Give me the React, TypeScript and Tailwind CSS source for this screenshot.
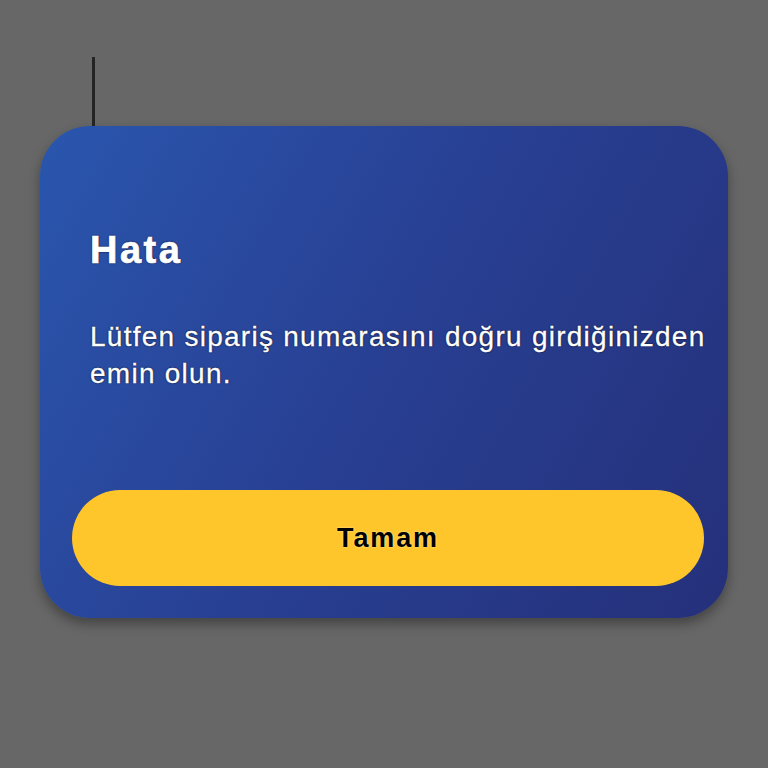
import React from "react";

export default function App() {
  return (
    <div
      className="w-[768px] h-[768px] bg-[#676767] pt-[57px] pl-[40px]"
      style={{ fontFamily: '"Liberation Sans", Arial, sans-serif' }}
    >
      {/* stand behind the dialog */}
      <div className="ml-[52px] w-[3px] h-[69px] bg-[#242424]" />

      {/* error dialog */}
      <div className="w-[688px] h-[492px] rounded-[50px] bg-[linear-gradient(120deg,#2a56ae_0%,#283f92_50%,#25307a_100%)] shadow-[0_6px_12px_rgba(0,0,0,0.35)] flex flex-col pt-[105px] pb-[32px] pl-[32px] pr-[24px]">
        <h1 className="pl-[18px] text-[38px] leading-[38px] font-bold tracking-[0.065em] text-white [-webkit-text-stroke:0.7px_white] [text-shadow:0_0_2px_#0b1230,0_0_1px_#000]">
          Hata
        </h1>
        <p className="pl-[18px] mt-[49px] w-[640px] text-[28px] leading-[37px] tracking-[0.045em] text-white [-webkit-text-stroke:0.3px_white] [text-shadow:0_0_2px_#0b1230,0_0_1px_#000]">
          Lütfen sipariş numarasını doğru girdiğinizden emin olun.
        </p>
        <button className="mt-auto h-[96px] w-full rounded-full bg-[#ffc62c] flex items-center justify-center text-[27px] font-bold tracking-[0.07em] text-black [text-shadow:0_0_2px_#fff3c0]">
          Tamam
        </button>
      </div>
    </div>
  );
}
